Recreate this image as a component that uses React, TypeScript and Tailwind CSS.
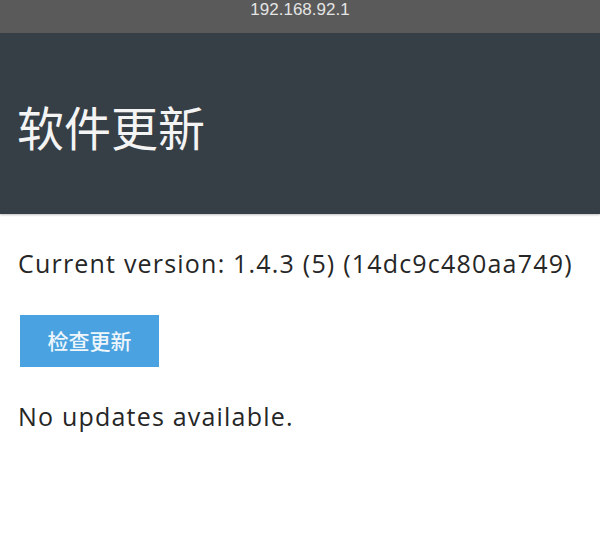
export default function App() {
  return (
    <div className="w-[600px] h-[536px] overflow-hidden bg-white">
      <div className="h-[33px] bg-[#5a5a5a] flex justify-center">
        <span className="text-[17px] leading-[20px] text-[#e4e4e4] font-['Liberation_Sans',sans-serif]">
          192.168.92.1
        </span>
      </div>
      <header className="h-[181px] bg-[#363f46] flex items-center px-[17px] pt-[4px] shadow-[0_1px_2px_rgba(0,0,0,0.25)]">
        <h1 className="text-[47px] leading-none text-[#f4f4f4] font-['Noto_Sans_CJK_SC',sans-serif]">
          软件更新
        </h1>
      </header>
      <main className="px-[18px] pt-[33px] font-['Open_Sans','Noto_Sans_CJK_SC',sans-serif] text-[#262626]">
        <p className="text-[25px] leading-[32px] font-medium tracking-[1.2px] whitespace-nowrap">
          Current version: 1.4.3 (5) (14dc9c480aa749)
        </p>
        <button className="mt-[36px] ml-[2px] w-[139px] h-[52px] bg-[#4aa3e0] text-[#eef6fc] text-[21px] font-medium font-['Noto_Sans_CJK_SC',sans-serif] flex items-center justify-center">
          检查更新
        </button>
        <p className="mt-[33px] text-[25px] leading-[32px] font-medium tracking-[1.2px]">No updates available.</p>
      </main>
    </div>
  );
}
